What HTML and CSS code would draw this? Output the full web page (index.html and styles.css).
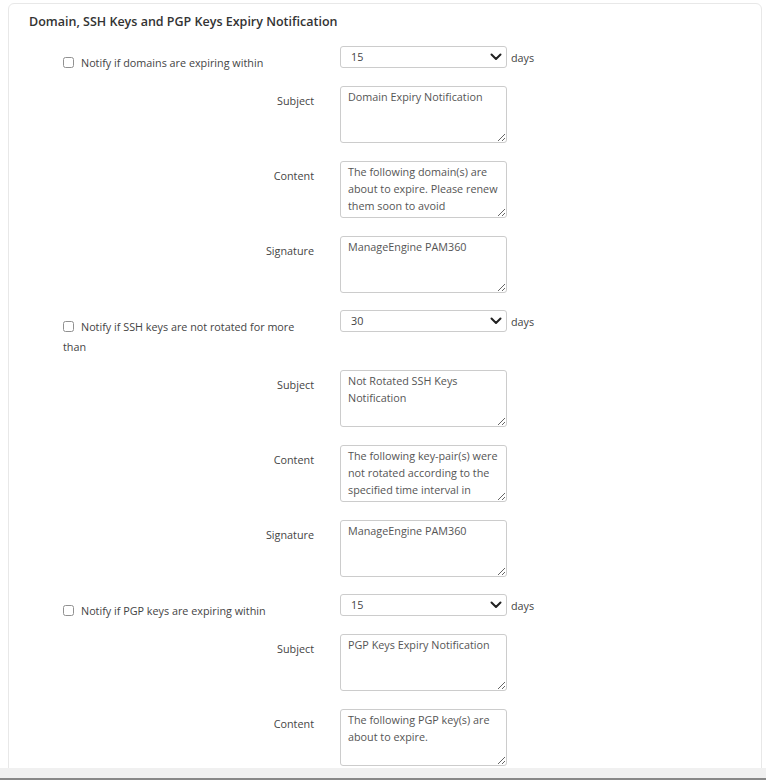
FILE: index.html
```html
<!DOCTYPE html>
<html>
<head>
<meta charset="utf-8">
<link rel="stylesheet" href="styles.css">
</head>
<body>
<div class="page">
  <div class="card">
    <div class="title">Domain, SSH Keys and PGP Keys Expiry Notification</div>
    <div class="form">
      <div class="row chk">
        <label class="lbl left"><input type="checkbox" class="cb">Notify if domains are expiring within</label>
        <div class="ctrl">
          <div class="select"><span>15</span><svg width="12" height="8" viewBox="0 0 12 8"><polyline points="1.5,1.5 6,6 10.5,1.5" fill="none" stroke="#222" stroke-width="2" stroke-linecap="round" stroke-linejoin="round"/></svg></div>
          <span class="unit">days</span>
        </div>
      </div>
      <div class="row">
        <div class="lbl">Subject</div>
        <div class="ctrl"><textarea class="ta">Domain Expiry Notification</textarea></div>
      </div>
      <div class="row">
        <div class="lbl">Content</div>
        <div class="ctrl"><textarea class="ta">The following domain(s) are about to expire. Please renew them soon to avoid inconveniences.</textarea></div>
      </div>
      <div class="row">
        <div class="lbl">Signature</div>
        <div class="ctrl"><textarea class="ta">ManageEngine PAM360</textarea></div>
      </div>

      <div class="row chk">
        <label class="lbl left"><input type="checkbox" class="cb">Notify if SSH keys are not rotated for more than</label>
        <div class="ctrl">
          <div class="select"><span>30</span><svg width="12" height="8" viewBox="0 0 12 8"><polyline points="1.5,1.5 6,6 10.5,1.5" fill="none" stroke="#222" stroke-width="2" stroke-linecap="round" stroke-linejoin="round"/></svg></div>
          <span class="unit">days</span>
        </div>
      </div>
      <div class="row">
        <div class="lbl">Subject</div>
        <div class="ctrl"><textarea class="ta">Not Rotated SSH Keys Notification</textarea></div>
      </div>
      <div class="row">
        <div class="lbl">Content</div>
        <div class="ctrl"><textarea class="ta">The following key-pair(s) were not rotated according to the specified time interval in accordance with the policy.</textarea></div>
      </div>
      <div class="row">
        <div class="lbl">Signature</div>
        <div class="ctrl"><textarea class="ta">ManageEngine PAM360</textarea></div>
      </div>

      <div class="row chk">
        <label class="lbl left"><input type="checkbox" class="cb">Notify if PGP keys are expiring within</label>
        <div class="ctrl">
          <div class="select"><span>15</span><svg width="12" height="8" viewBox="0 0 12 8"><polyline points="1.5,1.5 6,6 10.5,1.5" fill="none" stroke="#222" stroke-width="2" stroke-linecap="round" stroke-linejoin="round"/></svg></div>
          <span class="unit">days</span>
        </div>
      </div>
      <div class="row">
        <div class="lbl">Subject</div>
        <div class="ctrl"><textarea class="ta">PGP Keys Expiry Notification</textarea></div>
      </div>
      <div class="row">
        <div class="lbl">Content</div>
        <div class="ctrl"><textarea class="ta">The following PGP key(s) are about to expire.</textarea></div>
      </div>
      <div class="row">
        <div class="lbl">Signature</div>
        <div class="ctrl"><textarea class="ta">ManageEngine PAM360</textarea></div>
      </div>
    </div>
  </div>
</div>
<div class="bottombar"></div>
</body>
</html>
```

FILE: styles.css
```css
html, body {
  margin: 0;
  padding: 0;
  background: #fff;
  overflow: hidden;
  height: 780px;
}
body {
  font-family: "Open Sans", "Noto Sans", sans-serif;
  font-size: 10.8px;
  color: #444;
}
.page {
  padding: 3px 4px 0 8px;
}
.card {
  border: 1px solid #e8e8e8;
  border-radius: 6px;
  padding: 9px 20px 40px 20px;
}
.title {
  font-size: 12.5px;
  font-weight: 600;
  color: #333;
  line-height: 18px;
  margin-bottom: 16px;
}
.form {
  padding-left: 34px;
}
.row {
  display: flex;
  align-items: flex-start;
  margin-bottom: 18px;
}
.row.chk {
  margin-top: -1px;
  margin-bottom: 13px;
}
.lbl {
  width: 251px;
  flex: none;
  text-align: right;
  line-height: 20px;
  padding-top: 5px;
  color: #444;
}
.lbl.left {
  text-align: left;
  padding-top: 7px;
}
.cb {
  width: 11px;
  height: 11px;
  margin: 0 7px 0 0;
  vertical-align: -1px;
  opacity: 0.8;
}
.ctrl {
  margin-left: 26px;
  display: flex;
  align-items: center;
}
.select {
  box-sizing: border-box;
  width: 167px;
  height: 22px;
  border: 1px solid #ccc;
  border-radius: 3px;
  padding: 0 4px 0 10px;
  display: flex;
  align-items: center;
  justify-content: space-between;
  color: #444;
}
.select span {
  margin-top: -1px;
}
.select svg {
  display: block;
}
.unit {
  margin-left: 4px;
  color: #444;
}
.ta {
  box-sizing: border-box;
  width: 167px;
  height: 57px;
  border: 1px solid #ccc;
  border-radius: 3px;
  padding: 1px 3px 2px 7px;
  font-family: "Open Sans", "Noto Sans", sans-serif;
  font-size: 10.8px;
  line-height: 17px;
  color: #555;
  overflow: hidden;
  resize: both;
  margin: 0;
  display: block;
}
.bottombar {
  position: fixed;
  left: 0;
  right: 0;
  bottom: 0;
  height: 10px;
  background: #f0f0f0;
  border-bottom: 2px solid #888;
}
```
